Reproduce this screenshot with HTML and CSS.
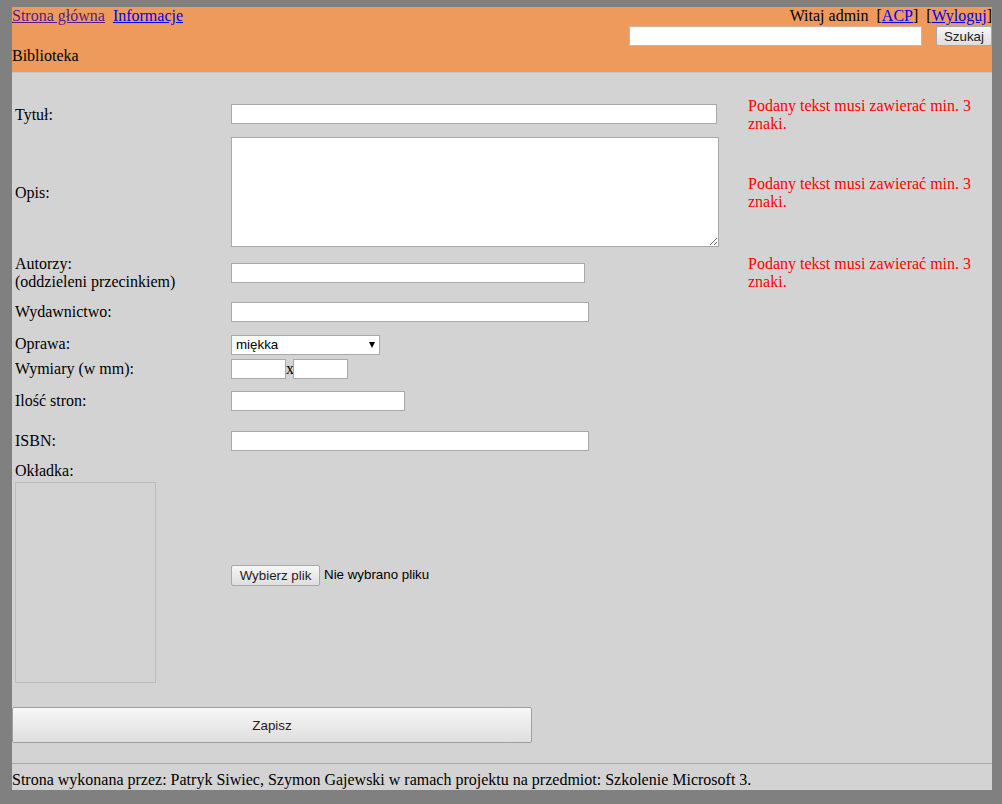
FILE: index.html
```html
<!DOCTYPE html>
<html lang="pl">
<head>
<meta charset="utf-8">
<title>Biblioteka</title>
<link rel="stylesheet" href="styles.css">
</head>
<body>
<div class="page">
  <header class="header">
    <div class="topbar">
      <nav class="nav">
        <a href="#" class="visited">Strona główna</a>&nbsp; <a href="#">Informacje</a>
      </nav>
      <div class="user">
        <div class="welcome">Witaj admin&nbsp; [<a href="#">ACP</a>]&nbsp; [<a href="#">Wyloguj</a>]</div>
        <form class="search">
          <input type="text" class="search-input">
          <button type="button" class="btn search-btn">Szukaj</button>
        </form>
      </div>
    </div>
    <div class="brand">Biblioteka</div>
  </header>

  <main class="main">
    <form class="book-form">
      <div class="label">Tytuł:</div>
      <div class="field"><input type="text" class="inp w-title"></div>
      <div class="error">Podany tekst musi zawierać min. 3 znaki.</div>

      <div class="label">Opis:</div>
      <div class="field field-top"><textarea class="txt"></textarea></div>
      <div class="error">Podany tekst musi zawierać min. 3 znaki.</div>

      <div class="label">Autorzy:<br>(oddzieleni przecinkiem)</div>
      <div class="field"><input type="text" class="inp w-authors"></div>
      <div class="error">Podany tekst musi zawierać min. 3 znaki.</div>

      <div class="label">Wydawnictwo:</div>
      <div class="field"><input type="text" class="inp w-wide"></div>
      <div class="error"></div>

      <div class="label">Oprawa:</div>
      <div class="field">
        <div class="select-wrap">
          <select class="sel"><option>miękka</option><option>twarda</option></select>
          <span class="sel-arrow"></span>
        </div>
      </div>
      <div class="error"></div>

      <div class="label">Wymiary (w mm):</div>
      <div class="field dims"><input type="text" class="inp w-dim"><span class="x">x</span><input type="text" class="inp w-dim"></div>
      <div class="error"></div>

      <div class="label">Ilość stron:</div>
      <div class="field"><input type="text" class="inp w-pages"></div>
      <div class="error"></div>

      <div class="label">ISBN:</div>
      <div class="field"><input type="text" class="inp w-wide"></div>
      <div class="error"></div>

      <div class="label label-cover">Okładka:<div class="cover"></div></div>
      <div class="field file-field"><button type="button" class="btn file-btn">Wybierz plik</button><span class="file-name">Nie wybrano pliku</span></div>
      <div class="error"></div>
    </form>
    <button type="button" class="btn save-btn">Zapisz</button>
  </main>

  <footer class="footer">Strona wykonana przez: Patryk Siwiec, Szymon Gajewski w ramach projektu na przedmiot: Szkolenie Microsoft 3.</footer>
</div>
</body>
</html>
```

FILE: styles.css
```css
html, body {
  margin: 0;
  padding: 0;
  background: #808080;
}
body {
  padding: 7px 10px 13px 12px;
  font-family: "Liberation Serif", "Times New Roman", serif;
  font-size: 16px;
  line-height: 18px;
  color: #000;
}
a { color: #0000ee; text-decoration: underline; }
a.visited { color: #551a8b; }

.page {
  width: 980px;
  background: #d3d3d3;
}

.header {
  background: #ee9a5d;
  height: 65px;
  border-bottom: 1px solid #c4c4c4;
}
.topbar {
  display: flex;
  justify-content: space-between;
  align-items: flex-start;
}
.user {
  display: flex;
  flex-direction: column;
  align-items: flex-end;
}
.search {
  display: flex;
  align-items: center;
  height: 20px;
  margin: 1px 0 0 0;
}
.search-input {
  width: 293px;
  height: 20px;
  box-sizing: border-box;
  border: 1px solid #d8b39a;
  background: #fff;
  margin: 0 14px 0 0;
  padding: 1px 2px;
}
.btn {
  font-family: Arial, "Liberation Sans", sans-serif;
  font-size: 13.33px;
  color: #222;
  border: 1px solid #a9a9a9;
  border-radius: 2px;
  background: linear-gradient(#f7f7f7, #dedede);
  padding: 0 6px;
  box-sizing: border-box;
  cursor: pointer;
}
.search-btn {
  width: 56px;
  height: 20px;
}
.brand {
  margin-top: 1px;
}

.main {
  padding: 23px 0 20px 0;
}
.book-form {
  display: grid;
  grid-template-columns: 216px 517px 244px;
  grid-template-rows: 38px 118px 42px 36px 28px 22px 42px 38px auto;
  padding-left: 3px;
}
.label {
  display: flex;
  flex-direction: column;
  justify-content: center;
}
.label-cover {
  justify-content: flex-start;
  padding-top: 2px;
}
.cover {
  width: 139px;
  height: 199px;
  border: 1px solid #bdbdbd;
  margin-top: 2px;
}
.field {
  display: flex;
  align-items: center;
}
.field-top {
  align-items: flex-start;
}
.error {
  display: flex;
  align-items: center;
  color: #ff0000;
}
.inp, .txt, .sel {
  box-sizing: border-box;
  border: 1px solid #a9a9a9;
  background: #fff;
  font-family: Arial, "Liberation Sans", sans-serif;
  font-size: 13.33px;
  margin: 0;
  padding: 1px 2px;
  border-radius: 0;
}
.inp { height: 20px; }
.w-title { width: 486px; margin-top: -2px; }
.w-authors { width: 354px; margin-top: -1px; }
.w-wide { width: 358px; }
.w-pages { width: 174px; }
.w-dim { width: 55px; }
.x {
  width: 7px;
  text-align: center;
  font-size: 16px;
}
.dims { gap: 0; }
.txt {
  width: 488px;
  height: 110px;
  margin-top: 3px;
  resize: both;
}
.select-wrap {
  position: relative;
  width: 149px;
  height: 20px;
  margin-top: 1px;
}
.sel {
  width: 149px;
  height: 20px;
  appearance: none;
  -webkit-appearance: none;
  padding: 0 4px;
  color: #000;
  border: 1px solid #a9a9a9;
}
.sel-arrow {
  position: absolute;
  right: 5px;
  top: 7px;
  width: 0;
  height: 0;
  border-left: 3.5px solid transparent;
  border-right: 3.5px solid transparent;
  border-top: 6px solid #000;
  pointer-events: none;
}
.file-field {
  align-items: center;
  padding-top: 7px;
}
.file-btn {
  height: 21px;
  width: 89px;
  padding: 0;
}
.file-name {
  font-family: Arial, "Liberation Sans", sans-serif;
  font-size: 13.33px;
  margin-left: 4px;
  color: #000;
}
.save-btn {
  display: block;
  width: 520px;
  height: 36px;
  margin-top: 24px;
  border-color: #a0a0a0;
}

.footer {
  border-top: 1px solid #a9a9a9;
  padding: 7px 0 1px 0;
}
```
